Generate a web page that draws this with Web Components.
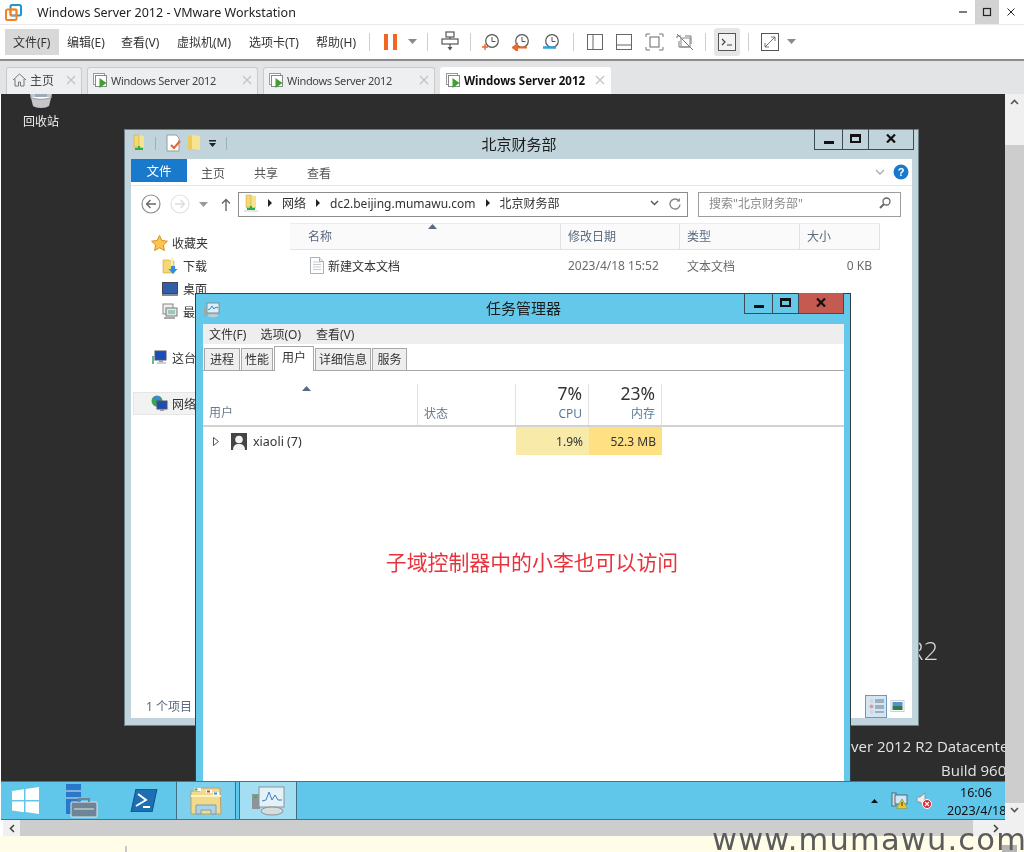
<!DOCTYPE html>
<html lang="zh">
<head>
<meta charset="utf-8">
<title>Windows Server 2012 - VMware Workstation</title>
<style>
html,body{margin:0;padding:0;width:1024px;height:852px;overflow:hidden;background:#fff}
body{font:12px "Noto Sans","Noto Sans CJK SC",sans-serif;color:#222}
</style>
</head>
<body>
<vm-app></vm-app>
<script>
const SANS='"Noto Sans","Noto Sans CJK SC",sans-serif';
const svg=(w,h,vb,body,extra='')=>`<svg width="${w}" height="${h}" viewBox="${vb}" style="display:block;flex:none;${extra}">${body}</svg>`;
const caret=(c='#8a8a8a')=>svg(9,5,'0 0 9 5',`<path d="M0 0h9L4.500 5z" fill="${c}"/>`);
const netFolder=(s=16)=>svg(s-2,s+2,'0 0 14 18',`<path d="M2 1h5l1 1h4v12H2z" fill="#e9c64f"/><path d="M7 1l5 1.500v11l-5-1z" fill="#f7e391"/><path d="M2 1h5v12H2z" fill="#f3d873" stroke="#c9a63c" stroke-width=".5"/><path d="M6 12h2v2h3v2H3v-2h3z" fill="#21b14a"/><path d="M0 17h14" stroke="#ccc"/>`);
const I={
 logo:svg(17,17,'0 0 17 17',`<rect x="5.500" y="1" width="10.500" height="10.500" rx="1.500" fill="none" stroke="#1d95d8" stroke-width="2"/><rect x="1" y="5.500" width="10.500" height="10.500" rx="1.500" fill="none" stroke="#f58220" stroke-width="2"/><rect x="5.500" y="5.500" width="6" height="6" fill="none" stroke="#f58220" stroke-width="1.500"/>`),
 snap:svg(18,21,'0 0 18 21',`<g fill="none" stroke="#555" stroke-width="1.200"><rect x="5" y="1" width="8" height="5" fill="#fff"/><rect x="1" y="8" width="16" height="5" fill="#fff"/><path d="M9 6v2M9 13v4"/></g><path d="M6.500 16h5L9 19.500z" fill="#555"/>`),
 clock:(acc)=>svg(18,18,'0 0 18 18',`<circle cx="10" cy="8" r="6.300" fill="#fff" stroke="#555" stroke-width="1.200"/><path d="M10 4v4.500h3.500" fill="none" stroke="#555"/>${acc}`),
 lay1:svg(16,16,'0 0 16 16',`<rect x=".5" y=".5" width="15" height="15" fill="none" stroke="#666"/><path d="M6 1v14" stroke="#666"/>`),
 lay2:svg(16,16,'0 0 16 16',`<rect x=".5" y=".5" width="15" height="15" fill="none" stroke="#666"/><path d="M1 11h14" stroke="#666"/>`),
 lay3:svg(19,18,'0 0 19 18',`<path d="M1 4V1h4M14 1h4v3M18 14v3h-4M5 17H1v-3" fill="none" stroke="#777"/><rect x="5" y="4" width="9" height="10" fill="none" stroke="#666"/>`),
 lay4:svg(18,18,'0 0 18 18',`<path d="M1 5V3h4M9 3h6v8M13 14H3V8" fill="none" stroke="#777"/><rect x="5" y="5" width="9" height="9" fill="none" stroke="#888"/><path d="M1 1l16 16" stroke="#777"/>`),
 term:svg(18,18,'0 0 18 18',`<rect x=".5" y=".5" width="17" height="17" fill="#f3f3f3" stroke="#555"/><path d="M4 6l3 3-3 3" fill="none" stroke="#444" stroke-width="1.200"/><path d="M9 12h5" stroke="#444"/>`),
 expand:svg(18,18,'0 0 18 18',`<rect x=".5" y=".5" width="17" height="17" fill="none" stroke="#555"/><path d="M4 14l10-10M10 4h4v4M4 10v4h4" fill="none" stroke="#666" stroke-width=".9"/>`),
 home:svg(15,14,'0 0 15 14',`<path d="M1 7l6.500-6L14 7M3 6v7h3.500V9h2v4H12V6" fill="none" stroke="#777"/>`),
 vm:svg(15,15,'0 0 15 15',`<rect x=".5" y=".5" width="11" height="11" fill="#fff" stroke="#999"/><rect x="2.500" y="2.500" width="11" height="11" fill="#fff" stroke="#888"/><path d="M6.500 5l7 5-7 5z" fill="#3f9f2f"/>`),
 star:svg(17,16,'0 0 17 16',`<path d="M8.500.5l2.400 5 5.500.7-4 3.800 1 5.500-4.900-2.700-4.900 2.700 1-5.500-4-3.800 5.500-.7z" fill="#f9c74f" stroke="#e08a1e"/>`),
 dl:svg(16,18,'0 0 16 18',`<path d="M1 3h6l2 1h3v12H1z" fill="#f3d873" stroke="#c9a63c" stroke-width=".6"/><path d="M9 1h2v11H9z" fill="#fbeeb2"/><path d="M9 9h4v3h2.500L11 17l-4.500-5H9z" fill="#2f8fe0"/>`),
 desk:svg(16,14,'0 0 16 14',`<rect x=".5" y=".5" width="15" height="11" fill="#2f5fa8" stroke="#445"/><rect y="12" width="16" height="2" fill="#889"/>`),
 recent:svg(16,17,'0 0 16 17',`<rect x="1" y="1" width="10" height="10" fill="#eee" stroke="#888"/><rect x="4" y="5" width="11" height="8" fill="#dfe8ea" stroke="#777"/><path d="M6 8h7M6 10h7" stroke="#5a8"/><path d="M2 14h11v2H2z" fill="#aaa"/>`),
 pc:svg(16,15,'0 0 16 15',`<rect x="4" y="1" width="11" height="9" fill="#1c4fb4" stroke="#556"/><path d="M8 10h4v2H8z" fill="#99a"/><path d="M1 6h2v8H1z" fill="#6b8"/><path d="M6 13h9" stroke="#99a"/>`),
 net:svg(17,17,'0 0 17 17',`<circle cx="6" cy="6" r="5.500" fill="#3aa55a"/><path d="M2 3a5 5 0 0 1 8 0l-3 3-3-1z" fill="#3f86d8"/><rect x="6" y="6" width="10" height="8" fill="#1c4fb4" stroke="#556"/><path d="M9 14h4v2H9z" fill="#99a"/>`),
 doc:svg(14,17,'0 0 14 17',`<path d="M.5.5h9l4 4v12H.5z" fill="#fff" stroke="#a9b1b8"/><path d="M3 5h8M3 7.500h8M3 10h8M3 12.500h8" stroke="#c5ced6"/><path d="M9.500.5v4h4" fill="#eee" stroke="#a9b1b8"/>`),
 tm:svg(16,16,'0 0 16 16',`<rect x="3" y="1" width="12" height="10" fill="#dff0f5" stroke="#7b8f96"/><path d="M4 8l2-1 2-3 2 3 2-2 2 1" fill="none" stroke="#3f7fc0"/><path d="M0 5h3v9H0z" fill="#9aa"/><ellipse cx="9" cy="13.500" rx="5" ry="1.800" fill="#c3cbce"/>`),
 user:svg(16,17,'0 0 16 17',`<rect width="16" height="17" fill="#444"/><circle cx="8" cy="6.500" r="3.800" fill="#f2f2f2"/><path d="M2 17c0-5 3-6 6-6s6 1 6 6z" fill="#f2f2f2"/>`),
 recycle:svg(26,14,'0 0 26 14',`<path d="M2 0h22l-3 12c-3 2.500-13 2.500-16 0z" fill="#c4c6c8"/><path d="M2 3c6 3 16 3 22 0" fill="#fff" stroke="#999"/><path d="M7 0h12v3H7z" fill="#9ab"/>`),
 start:svg(27,27,'0 0 27 27',`<path d="M0 4l12-1.700V13H0zM13.500 2L27 0v13H13.500zM0 14.500h12v10.700L0 23.500zM13.500 14.500H27V27l-13.500-2z" fill="#fff"/>`),
 sm:svg(33,34,'0 0 33 34',`<rect x="1" y="0" width="15" height="30" fill="#2a78c8"/><path d="M1 7h15M1 14h15" stroke="#d8ecf6" stroke-width="1.200"/><rect x="6" y="18" width="26" height="15" rx="1" fill="#6f8596" stroke="#dbe8ee"/><path d="M14 18v-3h10v3" fill="none" stroke="#6f8596" stroke-width="2"/><path d="M9 25h20" stroke="#dbe8ee"/>`),
 ps:svg(28,23,'0 0 28 23',`<path d="M6 0h21l-5 23H1z" fill="#1d6fb4" stroke="#0f4f85"/><path d="M8 5l8 6-10 6M13 18h7" fill="none" stroke="#fff" stroke-width="2"/>`),
 ef:svg(32,28,'0 0 32 28',`<path d="M1 4h9l1-3h19l1 26H1z" fill="#f3d98a" stroke="#b9a16a"/><rect x="4" y="1" width="7" height="3" fill="#fff"/><rect x="4.500" y="1.500" width="3" height="2" fill="#2fb04a"/><rect x="16" y="3" width="6" height="3" fill="#fff"/><rect x="17" y="3.500" width="3" height="2" fill="#d8432f"/><rect x="23" y="5" width="6" height="3" fill="#fff"/><rect x="24" y="5.500" width="3" height="2" fill="#2f8fe0"/><path d="M1 9h30" stroke="#fff3c0" stroke-width="2"/><path d="M6 27V18h20v9h-5v-4H11v4z" fill="#a9d3ea" stroke="#7b9fb2"/>`),
 tmBig:svg(33,30,'0 0 33 30',`<path d="M0 8h8v15H0z" fill="#8b9499"/><rect x="2" y="10" width="3" height="2" fill="#3fb04a"/><rect x="7" y="1" width="25" height="20" fill="#e4f1f6" stroke="#8b9499"/><path d="M10 15l4-1 3-8 3 8 3-5 3 5 4 0" fill="none" stroke="#3f7fc0"/><ellipse cx="20" cy="25" rx="11" ry="4" fill="#d7dcde" stroke="#8b9499"/>`),
 keyNet:svg(17,17,'0 0 17 17',`<rect x="1" y="1" width="4" height="13" fill="#d6dfe3" stroke="#4a6a78"/><rect x="4" y="3" width="12" height="9" fill="#cfe8f3" stroke="#4a6a78"/><path d="M11 7l5.500 9.500h-11z" fill="#f5c518" stroke="#8a7"/><path d="M11 10v4" stroke="#333"/>`),
 spk:svg(16,17,'0 0 16 17',`<path d="M1 5h3l5-4v13l-5-4H1z" fill="#e7edf0" stroke="#8896a0"/><circle cx="11" cy="12" r="4.500" fill="#e0222e" stroke="#fff"/><path d="M9 10l4 4M13 10l-4 4" stroke="#fff" stroke-width="1.200"/>`),
 detail:svg(15,17,'0 0 15 17',`<circle cx="2.500" cy="3" r="2" fill="#cfd6da"/><circle cx="2.500" cy="8.500" r="2" fill="#e89a92"/><circle cx="2.500" cy="14" r="2" fill="#cfd6da"/><path d="M6 2h9M6 4h9M6 8h9M6 10h9M6 14h9" stroke="#6a7a86"/>`),
 thumb:svg(15,12,'0 0 14 12',`<rect x=".5" y=".5" width="13" height="11" fill="#fff" stroke="#c8d0d6"/><rect x="2" y="2" width="10" height="4" fill="#5a8fc8"/><rect x="2" y="6" width="10" height="4" fill="#2c7a55"/>`),
};
function def(name,css,html){
  customElements.define(name,class extends HTMLElement{
    constructor(){super();const r=this.attachShadow({mode:'open'});
      r.innerHTML=`<style>${css}</style>`+(typeof html==='function'?html(this):html);}
  });
}

def('win-controls',`
:host{display:flex;height:21px;flex:none;border:1px solid #3c4c54;border-top:0;box-sizing:border-box}
span{display:flex;align-items:center;justify-content:center;box-sizing:border-box}
span+span{border-left:1px solid #3c4c54}
.m{width:27px}.x{width:26px}.c{flex:1;font-size:0}
:host([red]) .c{background:#c55a50}
:host{width:var(--w,100px)}
i{display:block}
`,`<span class="m"><i style="width:10px;height:3px;background:#111;margin-top:6px"></i></span>
<span class="x"><i style="border:2px solid #111;border-top-width:3px;box-sizing:content-box;width:7px;height:4px;margin-bottom:2px"></i></span>
<span class="c">${svg(10,9,'0 0 10 9','<path d="M1 .5l8 8M9 .5l-8 8" stroke="#111" stroke-width="2.200"/>','margin-bottom:2px')}</span>`);

def('vm-titlebar',`
:host{display:flex;align-items:center;height:25px;box-sizing:border-box;padding-left:5px;background:#fff;border-bottom:1px solid #e9e9e9}
.t{margin-left:15px;font-size:12.500px;color:#222;white-space:nowrap}
.sp{flex:1}
.b{width:24px;height:24px;display:flex;align-items:center;justify-content:center}
.max{background:#d2d2d2}
.btns{display:flex;margin-right:1px}
`,`${I.logo}<span class="t"><slot></slot></span><span class="sp"></span>
<div class="btns"><div class="b">${svg(10,10,'0 0 10 10','<path d="M1 5h8" stroke="#222" stroke-width="1.200"/>')}</div>
<div class="b max">${svg(10,10,'0 0 10 10','<rect x="1.500" y="1.500" width="7" height="7" fill="none" stroke="#222" stroke-width="1.200"/>')}</div>
<div class="b">${svg(10,10,'0 0 10 10','<path d="M1.500 1.500l7 7M8.500 1.500l-7 7" stroke="#222"/>')}</div></div>`);

def('vm-toolbar',`
:host{display:flex;align-items:center;height:36px;box-sizing:border-box;background:#fff;border-bottom:2px solid #8d8d8d;padding:0 0 1px 5px}
.mi{display:flex;align-items:center;height:26px;font-size:12px;color:#333;white-space:nowrap}
.mi.on{background:#d8d8d8}
.s{width:1px;height:18px;background:#cfcfcf;flex:none}
.hl{width:26px;height:28px;border-radius:3px;background:#e6e6e6;display:flex;align-items:center;justify-content:center}
.pause{width:13px;height:16px;display:flex;justify-content:space-between}
.pause i{width:4px;background:#f26522}
`,`<div class="mi on" style="width:54px;padding-left:8px;box-sizing:border-box">文件(F)</div>
<div class="mi" style="margin-left:8px;width:54px">编辑(E)</div>
<div class="mi" style="width:56px">查看(V)</div>
<div class="mi" style="width:72px">虚拟机(M)</div>
<div class="mi" style="width:67px">选项卡(T)</div>
<div class="mi" style="width:53px">帮助(H)</div>
<div class="s"></div>
<div class="pause" style="margin-left:14px"><i></i><i></i></div><span style="margin-left:11px">${caret()}</span>
<div class="s" style="margin-left:10px"></div>
<span style="margin-left:13px">${I.snap}</span>
<div class="s" style="margin-left:11px"></div>
<span style="margin-left:11px">${I.clock('<path d="M0 14h6M3 11v6" stroke="#f26522" stroke-width="1.400"/>')}</span>
<span style="margin-left:12px">${I.clock('<path d="M1 14.500h14M1 14.500l4-3v6z" stroke="#f26522" stroke-width="2" fill="#f26522"/>')}</span>
<span style="margin-left:12px">${I.clock('<path d="M1 14.500h13" stroke="#2f9fe0" stroke-width="2.500"/>')}</span>
<div class="s" style="margin-left:13px"></div>
<span style="margin-left:13px">${I.lay1}</span><span style="margin-left:13px">${I.lay2}</span><span style="margin-left:13px">${I.lay3}</span><span style="margin-left:12px">${I.lay4}</span>
<div class="s" style="margin-left:11px"></div>
<div class="hl" style="margin-left:8px">${I.term}</div>
<div class="s" style="margin-left:8px"></div>
<span style="margin-left:12px">${I.expand}</span><span style="margin-left:8px">${caret()}</span>`);

def('vm-tab',`
:host{display:flex;align-items:center;height:27px;box-sizing:border-box;background:#eeeff1;border:1px solid #c9cacc;border-bottom:0;border-radius:3px 3px 0 0;padding:0 5px 2px 5px;font-size:11px;letter-spacing:-.32px;color:#444;white-space:nowrap}
:host([active]){background:#fff;font-weight:700;color:#111;border-color:#fff;font-size:11.500px;letter-spacing:0}
:host([home]){font-size:12px;letter-spacing:0}
.t{flex:1;margin-left:3px;overflow:hidden}
`,h=>`${h.hasAttribute('home')?I.home:I.vm}<span class="t"><slot></slot></span>${svg(10,10,'0 0 10 10','<path d="M1 1l8 8M9 1l-8 8" stroke="#c4c4c4" stroke-width="1.300"/>','')}`);

def('vm-tabs',`
:host{display:flex;gap:5px;align-items:flex-end;height:33px;box-sizing:border-box;padding-left:6px;background:#e3e4e6}
`,`<slot></slot>`);

def('quick-bar',`
:host{display:flex;align-items:center;height:22px;padding:2px 0 0 1px}
.s{width:1px;height:13px;background:#9fb0b6;flex:none}
`,`${netFolder(16)}<span class="s" style="margin-left:9px"></span>
<span style="margin-left:10px">${svg(15,18,'0 0 15 18','<path d="M1 1h9l3 3v13H1z" fill="#fff" stroke="#999"/><path d="M5 11l3 3 6-7" fill="none" stroke="#e8642c" stroke-width="2"/>')}</span>
<span style="margin-left:6px">${svg(14,18,'0 0 14 18','<path d="M1 2h12v14H1z" fill="#eccb5c"/><path d="M5 1l8 1v14l-8-1z" fill="#f7e391"/>')}</span>
<span style="margin-left:8px">${svg(7,7,'0 0 7 7','<path d="M0 0h7v1.500H0zM0 3h7L3.500 7z" fill="#222"/>')}</span>
<span class="s" style="margin-left:10px"></span>`);

def('explorer-side',`
:host{display:block;width:159px;flex:none;padding-top:9px;font-size:12px;color:#333}
.r{height:23px;display:flex;align-items:center;white-space:nowrap;overflow:hidden}
.r span{display:flex;width:16px;flex:none;margin-right:5px;justify-content:center}
.a{padding-left:20px}.b{padding-left:31px}
.on{background:#f2f2f2;border:1px solid #e6e6e6;box-sizing:border-box;margin-left:2px;padding-left:17px;margin-top:0}
`,`<div class="r a"><span>${I.star}</span>收藏夹</div>
<div class="r b"><span>${I.dl}</span>下载</div>
<div class="r b"><span>${I.desk}</span>桌面</div>
<div class="r b"><span>${I.recent}</span>最近访问的位置</div>
<div class="r"></div>
<div class="r a"><span>${I.pc}</span>这台电脑</div>
<div class="r"></div>
<div class="r on"><span>${I.net}</span>网络</div>`);

def('explorer-list',`
:host{display:block;flex:1;padding-top:1px;position:relative;font-size:12px}
.h{display:grid;grid-template-columns:271px 119px 120px 80px;width:590px;height:27px;background:#fafafa;border-top:1px solid #ececec;border-bottom:1px solid #e2e2e2;box-sizing:border-box;color:#5a6a80;padding-bottom:0}
.h div{display:flex;align-items:center;padding:0 0 2px 7px;border-right:1px solid #e2e2e2;position:relative}
.h div:first-child{padding-left:18px}
.car{position:absolute;left:138px;top:0;display:block}
.row{display:grid;grid-template-columns:271px 119px 120px 72px;width:590px;height:31px;align-items:center;color:#6a6a6a}
.row div{padding-left:7px;white-space:nowrap}
.row .n{display:flex;align-items:center;gap:4px;padding-left:20px;color:#333}
.row .sz{text-align:right;padding:0}
`,`<div class="h"><div>名称<span class="car">${svg(9,5,'0 0 9 5','<path d="M4.500 0L9 5H0z" fill="#5a6a80"/>')}</span></div><div>修改日期</div><div>类型</div><div>大小</div></div>
<div class="row"><div class="n">${I.doc}新建文本文档</div><div>2023/4/18 15:52</div><div>文本文档</div><div class="sz">0 KB</div></div>`);

def('win-explorer',`
:host{display:flex;flex-direction:column;position:absolute;left:123px;top:35px;width:795px;height:597px;box-sizing:border-box;background:#c1d4db;border:1px solid #6f7f86;padding:0 6px 7px;font-size:12px;color:#333}
.top{display:grid;grid-template-columns:1fr auto 1fr;height:29px;flex:none;margin-right:-1px}
.ttl{font-size:15px;color:#1c1c1c;padding-top:2px;white-space:nowrap;margin-right:6px;line-height:24px}
.top win-controls{justify-self:end;--w:100px;margin-right:-1px;margin-top:-1px}
.cl{flex:1;background:#fff;display:flex;flex-direction:column;min-height:0}
.rb{display:flex;height:27px;flex:none;box-sizing:border-box;border-bottom:1px solid #e6e6e6;align-items:flex-start}
.rb b{display:flex;align-items:center;justify-content:center;width:56px;height:23px;background:#1979ca;color:#fff;font-weight:400;font-size:12.500px}
.rb span{margin-top:5px;color:#555}
.rb .e{margin-left:auto;display:flex;gap:8px;margin-top:5px;margin-right:3px;align-items:center}
.nav{display:flex;align-items:center;height:36px;flex:none}
.box{display:flex;align-items:center;box-sizing:border-box;height:25px;border:1px solid #9d9d9d;background:#fff;padding-bottom:2px}
.addr{width:450px;margin-left:7px;padding-left:5px;border-color:#8d8d8d}
.srch{width:203px;margin-left:10px;padding-left:10px;color:#8a8a8a;justify-content:space-between;padding-right:9px}
.ar{margin:0 10px}
.body{flex:1;display:flex;min-height:0}
.st{height:24px;flex:none;display:flex;align-items:center;padding:0 7px 0 15px;color:#5a6a80;font-size:12px;margin-top:auto;position:relative}
.st .v{margin-left:auto;display:flex;gap:3px;align-items:center}
.sel{width:22px;height:23px;box-sizing:border-box;background:#d2e6f6;border:1px solid #6f97b8;display:flex;align-items:center;justify-content:center}
`,()=>{const tri=`<span class="ar">${svg(4,8,'0 0 4 8','<path d="M0 0l4 4-4 4z" fill="#222"/>')}</span>`;
return `<div class="top"><quick-bar></quick-bar><div class="ttl">北京财务部</div><win-controls></win-controls></div>
<div class="cl">
<div class="rb"><b>文件</b><span style="margin-left:14px">主页</span><span style="margin-left:29px">共享</span><span style="margin-left:29px">查看</span>
<div class="e">${svg(10,6,'0 0 10 6','<path d="M1 1l4 4 4-4" fill="none" stroke="#aaa" stroke-width="1.300"/>')}${svg(16,16,'0 0 16 16','<circle cx="8" cy="8" r="7.500" fill="#1979ca"/><text x="8" y="12" text-anchor="middle" font-size="11" font-weight="700" fill="#fff" font-family="Liberation Sans">?</text>')}</div></div>
<div class="nav">
<span style="margin-left:10px">${svg(20,20,'0 0 20 20','<circle cx="10" cy="10" r="9" fill="#fff" stroke="#8f8f8f" stroke-width="1.200"/><path d="M15 10H6M9.500 6L5.500 10l4 4" fill="none" stroke="#6a6a6a" stroke-width="1.400"/>')}</span>
<span style="margin-left:9px">${svg(20,20,'0 0 20 20','<circle cx="10" cy="10" r="9" fill="#fff" stroke="#e2e2e2" stroke-width="1.200"/><path d="M5 10h9M10.500 6l4 4-4 4" fill="none" stroke="#dcdcdc" stroke-width="1.400"/>')}</span>
<span style="margin-left:9px">${caret('#999')}</span>
<span style="margin-left:13px">${svg(10,13,'0 0 10 13','<path d="M5 13V2M1 5.500L5 1.500l4 4" fill="none" stroke="#666" stroke-width="1.400"/>')}</span>
<div class="addr box">${netFolder(16)}${tri}<span>网络</span>${tri}<span>dc2.beijing.mumawu.com</span>${tri}<span>北京财务部</span>
<span style="margin-left:auto;display:flex;align-items:center;gap:10px;margin-right:6px">${svg(9,6,'0 0 9 6','<path d="M1 1l3.500 3.500L8 1" fill="none" stroke="#555" stroke-width="1.400"/>')}${svg(12,13,'0 0 12 13','<path d="M10 4a5 5 0 1 0 1 3.500" fill="none" stroke="#888" stroke-width="1.400"/><path d="M7.500 4.500H11V1z" fill="#888"/>')}</span></div>
<div class="srch box"><span>搜索"北京财务部"</span>${svg(12,12,'0 0 12 12','<circle cx="7.500" cy="4.500" r="3.500" fill="none" stroke="#666" stroke-width="1.300"/><path d="M5 7l-4 4" stroke="#666" stroke-width="2"/>')}</div>
</div>
<div class="body"><explorer-side></explorer-side><explorer-list></explorer-list></div>
<div class="st"><span>1 个项目</span><span class="v"><span class="sel">${I.detail}</span>${I.thumb}</span></div>
</div>`});

def('tm-tab',`
:host{display:flex;align-items:center;justify-content:center;height:22px;box-sizing:border-box;padding-bottom:1px;background:#eeeeee;border:1px solid #a8a8a8;border-bottom:0;font-size:12px;color:#333;margin-right:1px;white-space:nowrap}
:host([active]){height:25px;background:#fff;padding-bottom:5px;position:relative;z-index:1;margin-bottom:-1px}
`,`<slot></slot>`);

def('win-taskmgr',`
:host{display:flex;flex-direction:column;position:absolute;left:194px;top:199px;width:656px;height:500px;box-sizing:border-box;background:#63c8ea;border:1px solid #2f3f47;border-bottom:0;padding:0 6px 0 7px;font-size:12px;color:#333}
.top{display:grid;grid-template-columns:1fr auto 1fr;height:30px;flex:none;align-items:start}
.ic{padding:8px 0 0 2px;margin-left:-1px}
.ttl{font-size:15px;color:#1c1c1c;line-height:24px;padding-top:2px;white-space:nowrap}
.top win-controls{justify-self:end;--w:100px;margin-top:-1px;margin-right:0}
.cl{flex:1;background:#fff;display:flex;flex-direction:column;min-height:0}
.mb{display:flex;height:20px;align-items:center;background:#eeeeee;flex:none;padding-left:6px;white-space:nowrap}
.tabs{display:flex;height:27px;box-sizing:border-box;align-items:flex-end;padding-left:1px;border-bottom:1px solid #a8a8a8;flex:none}
.hd{display:grid;grid-template-columns:215px 98px 73px 73px;grid-template-rows:41px;height:56px;box-sizing:border-box;border-bottom:2px solid #d2d2d2;flex:none;padding-top:13px;color:#6a7a8a}
.hd>div{border-right:1px solid #e2e2e2;position:relative;display:flex;flex-direction:column;justify-content:flex-end;padding:0 6px 3px;line-height:16px;min-height:0}
.hd>div:first-child{padding-bottom:4px}
.num{align-items:flex-end;color:#5a7a9a}
.num b{font-weight:400;font-size:17.500px;color:#333;line-height:22px;margin-bottom:2px;flex:none}
.car{position:absolute;left:99px;top:2px}
.row{display:grid;grid-template-columns:313px 73px 73px;height:28px;align-items:center}
.u{display:flex;align-items:center;padding-left:10px;font-size:12px;color:#333}
.c{height:100%;display:flex;align-items:center;justify-content:flex-end;padding-right:6px}
.msg{flex:1;text-align:center;color:#e8323c;font-size:20.900px;line-height:30px;padding:91px 0 0 17px;font-family:"Noto Sans CJK SC",sans-serif;white-space:nowrap}
`,`<div class="top"><div class="ic">${I.tm}</div><div class="ttl">任务管理器</div><win-controls red></win-controls></div>
<div class="cl">
<div class="mb"><span>文件(F)</span><span style="margin-left:14px">选项(O)</span><span style="margin-left:15px">查看(V)</span></div>
<div class="tabs"><tm-tab style="width:36px">进程</tm-tab><tm-tab style="width:32px">性能</tm-tab><tm-tab active style="width:40px">用户</tm-tab><tm-tab style="width:56px">详细信息</tm-tab><tm-tab style="width:35px">服务</tm-tab></div>
<div class="hd"><div><span class="car">${svg(9,5,'0 0 9 5','<path d="M4.500 0L9 5H0z" fill="#5a6a80"/>')}</span>用户</div><div>状态</div><div class="num"><b>7%</b>CPU</div><div class="num"><b>23%</b>内存</div></div>
<div class="row"><div class="u">${svg(6,9,'0 0 6 9','<path d="M.5.500l5 4-5 4z" fill="#fff" stroke="#555"/>','margin-right:12px')}${I.user}<span style="margin-left:6px;font-size:12.500px">xiaoli (7)</span></div><div class="c" style="background:#f8eaa8">1.9%</div><div class="c" style="background:#ffe083">52.3 MB</div></div>
<div class="msg">子域控制器中的小李也可以访问</div>
</div>`);

def('vm-taskbar',`
:host{display:flex;align-items:stretch;height:39px;flex:none;box-sizing:border-box;background:#60c6ea;border-top:1px solid #55707a;border-bottom:1px solid #55707a;position:relative}
.i{display:flex;align-items:center;justify-content:center}
.b{border-left:1px solid #3f6f82;border-right:1px solid #3f6f82;display:flex;align-items:center;justify-content:center;box-sizing:border-box}
.clk{width:73px;font-size:12.500px;color:#111;line-height:18px;padding-top:2px;white-space:nowrap;overflow:hidden;display:flex;flex-direction:column}
.clk span:first-child{padding-left:28px}
.clk span:last-child{padding-left:15px}
.tray{display:flex;align-items:center;margin-left:auto}
`,`<div class="i" style="margin-left:11px;width:27px">${I.start}</div><div class="i" style="margin-left:26px;width:33px">${I.sm}</div><div class="i" style="margin-left:32px;width:28px">${I.ps}</div>
<div class="b" style="margin-left:18px;width:60px;background:#7dd0ee">${I.ef}</div>
<div class="b" style="margin-left:3px;width:58px;background:#a3def3">${I.tmBig}</div>
<div class="tray"><span>${svg(7,4,'0 0 7 4','<path d="M3.500 0L7 4H0z" fill="#111"/>')}</span><span style="margin-left:13px">${I.keyNet}</span><span style="margin-left:8px">${I.spk}</span><div class="clk"><span>16:06</span><span>2023/4/18</span></div></div>`);

def('vm-screen',`
:host{display:block;flex:1;position:relative;overflow:hidden;background:#2d2d2d;min-height:0;color:#e8e8e8}
.rb{position:absolute;left:21px;top:0;width:38px;display:flex;flex-direction:column;align-items:center;font-size:12px;color:#f0f0f0;white-space:nowrap}
.rb span{margin-top:5px;line-height:18px}
.wm{position:absolute;white-space:nowrap;color:#dadada;font-family:"Open Sans",sans-serif}
.wrap{position:absolute;right:0;top:642px;width:154px;overflow:hidden;height:44px;font-family:"Open Sans",sans-serif;color:#e4e4e4;font-size:15px;white-space:nowrap}
`,`<div class="rb">${I.recycle}<span>回收站</span></div>
<div class="wm" style="left:907px;top:536px;font-size:26px;line-height:40px;font-weight:300">R2</div>
<div class="wrap"><div style="position:absolute;left:0;top:0;line-height:20px">ver 2012 R2 Datacenter</div><div style="position:absolute;left:90px;top:24px;line-height:20px">Build 9600</div></div>
<slot></slot>`);

def('vm-scroll-v',`
:host{display:flex;flex-direction:column;width:19px;background:#f0f0f0;box-sizing:border-box;grid-row:1 / 3;grid-column:2;height:742px}
.u{height:51px;display:flex;justify-content:center;padding-top:5px;box-sizing:border-box}
.t{height:658px;background:#cdcdcd}
.d{display:flex;justify-content:center;padding-top:4px}
`,`<div class="u">${svg(9,6,'0 0 9 6','<path d="M1 5l3.500-3.500L8 5" fill="none" stroke="#555" stroke-width="1.600"/>')}</div><div class="t"></div><div class="d">${svg(9,6,'0 0 9 6','<path d="M1 1l3.500 3.500L8 1" fill="none" stroke="#555" stroke-width="1.600"/>')}</div>`);

def('vm-scroll-h',`
:host{display:flex;height:16px;background:#f0f0f0;grid-column:1;grid-row:2;margin-left:2px;box-sizing:content-box;border-bottom:1px solid #666}
.l{width:17px;display:flex;align-items:center;justify-content:center}
.t{width:953px;background:#cdcdcd}
.r{flex:1;display:flex;align-items:center;justify-content:flex-end;padding-right:6px}
`,`<div class="l">${svg(6,9,'0 0 6 9','<path d="M5 1L1.500 4.500 5 8" fill="none" stroke="#444" stroke-width="1.600"/>')}</div><div class="t"></div><div class="r">${svg(6,9,'0 0 6 9','<path d="M1 1l3.500 3.500L1 8" fill="none" stroke="#444" stroke-width="1.600"/>')}</div>`);

def('vm-app',`
:host{display:flex;flex-direction:column;width:1024px;height:852px;position:relative;overflow:hidden;background:#fff;font-family:${SANS};filter:blur(.35px)}
.main{display:grid;grid-template-columns:1004px 19px;grid-template-rows:726px 18px;margin-left:1px;height:744px;flex:none}
.desk{display:flex;flex-direction:column;min-height:0;grid-column:1;grid-row:1}
.cream{flex:1;background:#fffde8;position:relative;margin-top:-2px}
.wm{position:absolute;left:712px;top:823px;font:30.500px/34px "DejaVu Sans",sans-serif;letter-spacing:1.200px;color:#5c5c5c;white-space:nowrap}
.tick{position:absolute;left:125px;top:846px;width:2px;height:6px;background:#c8c8c8}
.corner{position:absolute;left:1002px;top:845px;width:15px;height:7px;background:#b4b4b4}
`,`<vm-titlebar>Windows Server 2012 - VMware Workstation</vm-titlebar>
<vm-toolbar></vm-toolbar>
<vm-tabs>
<vm-tab home style="width:76px">主页</vm-tab>
<vm-tab style="width:171px">Windows Server 2012</vm-tab>
<vm-tab style="width:172px">Windows Server 2012</vm-tab>
<vm-tab active style="width:171px">Windows Server 2012</vm-tab>
</vm-tabs>
<div class="main">
<div class="desk"><vm-screen><win-explorer></win-explorer><win-taskmgr></win-taskmgr></vm-screen><vm-taskbar></vm-taskbar></div>
<vm-scroll-h></vm-scroll-h>
<vm-scroll-v></vm-scroll-v>
</div>
<div class="cream"></div>
<div class="tick"></div>
<div class="corner"></div>
<div class="wm">www.mumawu.com</div>`);
</script>
</body>
</html>
